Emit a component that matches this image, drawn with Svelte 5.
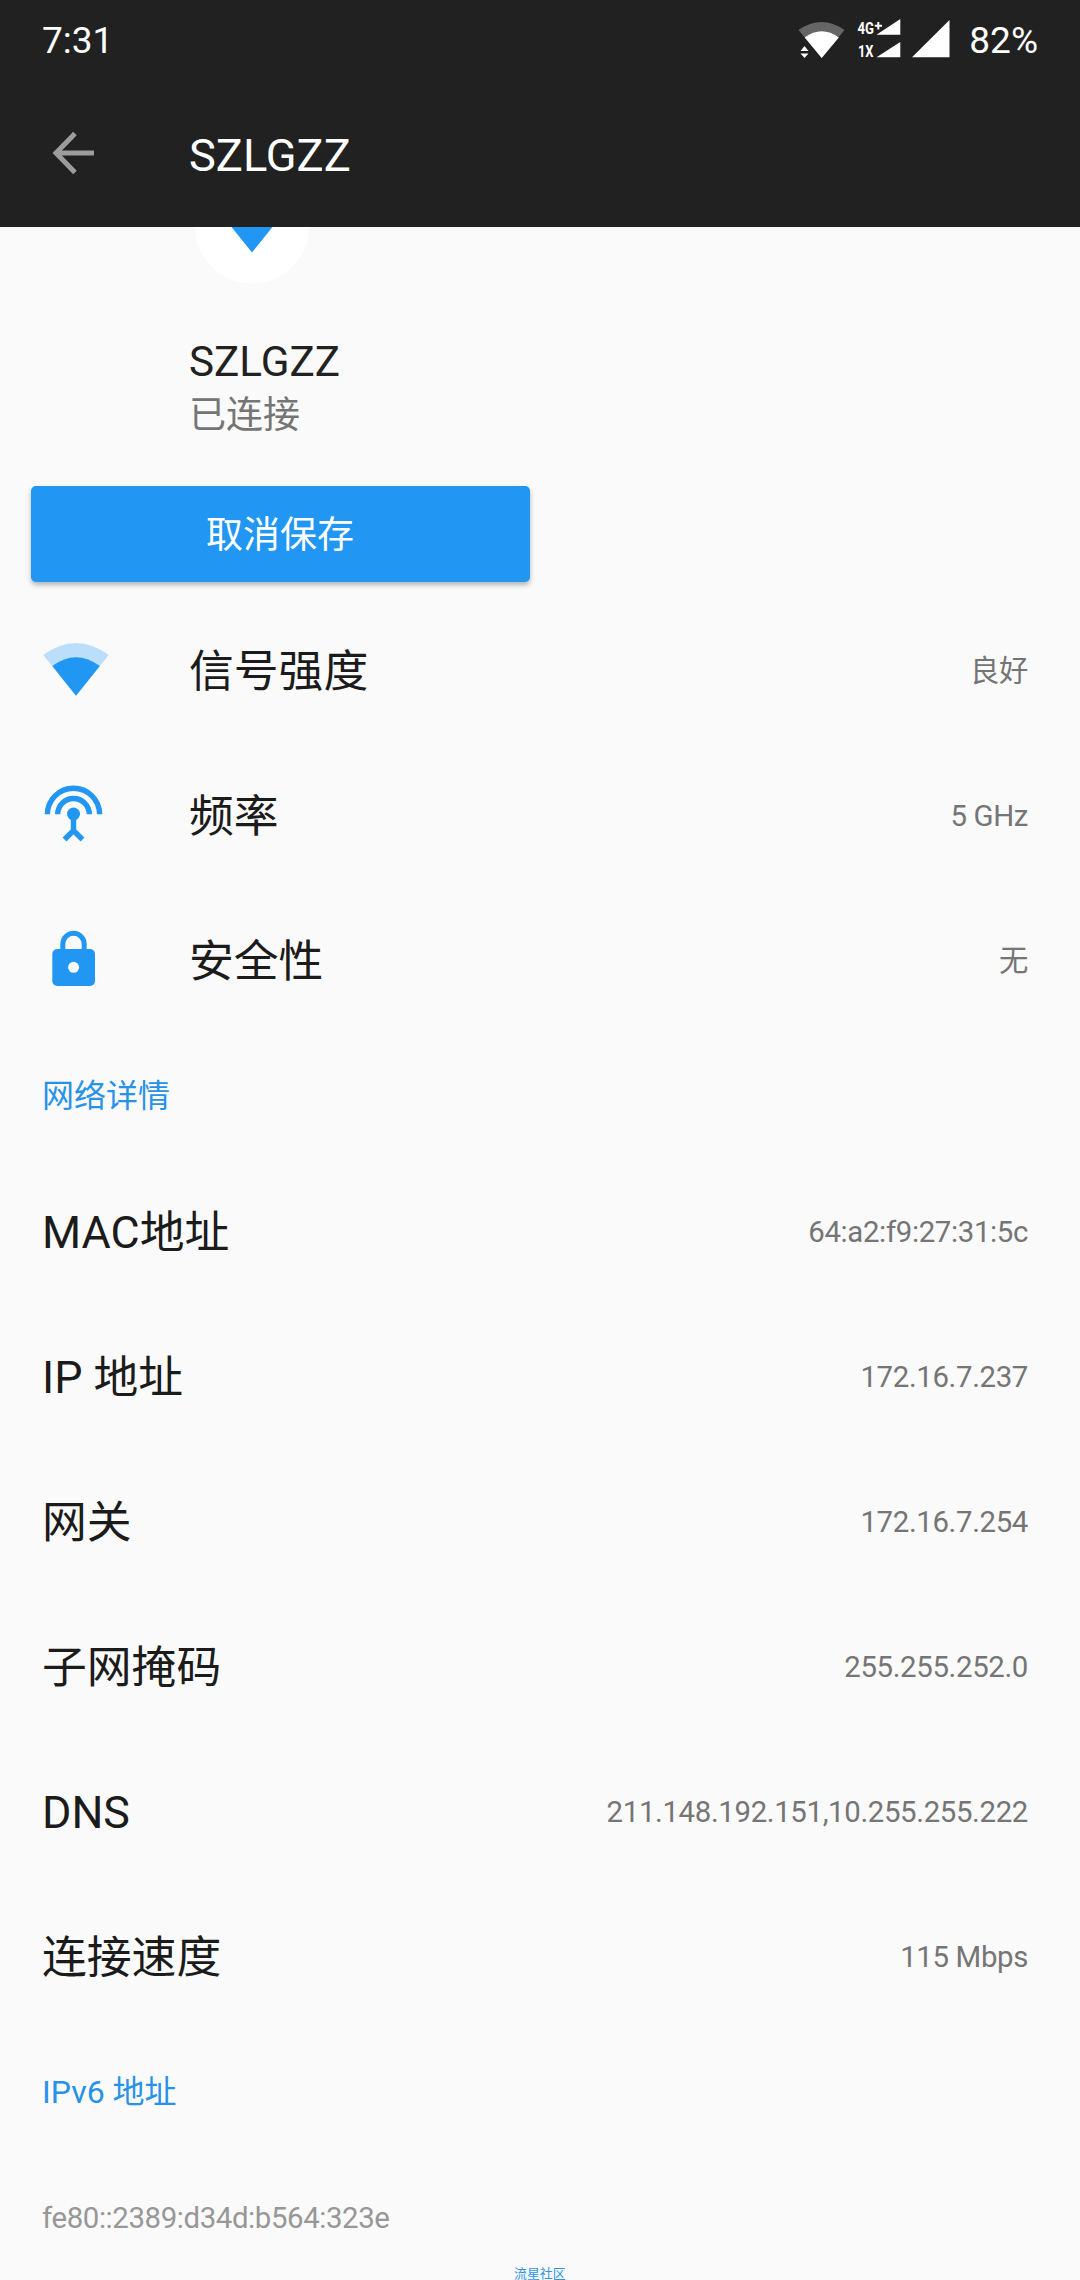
<script>
    let ssid = 'SZLGZZ';

    let summary = [
        { icon: 'wifi', title: '信号强度', value: '良好' },
        { icon: 'antenna', title: '频率', value: '5 GHz' },
        { icon: 'lock', title: '安全性', value: '无' }
    ];

    let details = [
        { title: 'MAC地址', value: '64:a2:f9:27:31:5c' },
        { title: 'IP 地址', value: '172.16.7.237' },
        { title: '网关', value: '172.16.7.254' },
        { title: '子网掩码', value: '255.255.252.0' },
        { title: 'DNS', value: '211.148.192.151,10.255.255.222' },
        { title: '连接速度', value: '115 Mbps' }
    ];
</script>

<div class="screen">
    <header>
        <div class="status-bar">
            <span class="clock">7:31</span>
            <svg class="status-icons" width="156" height="46" viewBox="796 17 156 46">
                <path d="M798.5 30Q821.5 14 844.5 30L821.7 58Z" fill="#666666"/>
                <path d="M804.7 37.5Q821.7 25 838.8 37.5L821.7 58Z" fill="#ffffff"/>
                <path d="M804.5 46L808.5 51H800.5ZM804.5 58L808.5 53.5H800.5Z" fill="#ffffff"/>
                <text x="857.5" y="34.3" font-size="16" textLength="16.5" lengthAdjust="spacingAndGlyphs">4G</text>
                <path d="M878.3 22V29.4M874.8 25.7H882" stroke="#ffffff" stroke-width="2"/>
                <text x="858" y="57.3" font-size="16" textLength="15.5" lengthAdjust="spacingAndGlyphs">1X</text>
                <path d="M876.5 34.7H900.3V19ZM876.5 57.2H900.3V42ZM912 57.3H949.5V20Z" fill="#ffffff"/>
            </svg>
            <span class="battery">82%</span>
        </div>
        <div class="toolbar">
            <svg class="back" width="44" height="44" viewBox="0 0 44 44">
                <path d="M24 2.5L5 22L24 41.5M5 22H43" fill="none" stroke="#9c9c9c" stroke-width="5"/>
            </svg>
            <h1>{ssid}</h1>
        </div>
    </header>

    <main>
        <section class="network">
            <svg class="avatar" width="118" height="57" viewBox="0 0 118 57">
                <circle cx="59" cy="-0.5" r="57" fill="#ffffff"/>
                <path d="M38.5 0H79.5L59 25.5Z" fill="#2196f3"/>
            </svg>
            <h2>{ssid}</h2>
            <p>已连接</p>
        </section>

        <button class="forget">取消保存</button>

        {#each summary as item}
            <div class="row">
                <div class="icon">
                    {#if item.icon === 'wifi'}
                        <svg width="68" height="69" viewBox="42 636 68 69">
                            <path d="M43.3 655Q76 631 108.7 655L76 695.7Z" fill="#bbdefb"/>
                            <path d="M52.3 666Q76 648.5 99.8 666L76 695.7Z" fill="#2196f3"/>
                        </svg>
                    {:else if item.icon === 'antenna'}
                        <svg width="68" height="69" viewBox="42 781 68 69">
                            <path d="M47.4 814.3A26.1 26.1 0 0 1 99.6 814.3M57.7 814.3A15.8 15.8 0 0 1 89.3 814.3M73.5 814V830M64.5 839.5L73.5 830.5L82.5 839.5" fill="none" stroke="#2196f3" stroke-width="5.4"/>
                            <circle cx="73.5" cy="814" r="6.5" fill="#2196f3"/>
                        </svg>
                    {:else}
                        <svg width="68" height="69" viewBox="42 926 68 69">
                            <path d="M62.8 950V944A10.7 10.7 0 0 1 84.2 944V950" fill="none" stroke="#2196f3" stroke-width="5"/>
                            <rect x="52.3" y="949" width="42.7" height="37" rx="5" fill="#2196f3"/>
                            <circle cx="73.6" cy="967.3" r="5.5" fill="#fafafa"/>
                        </svg>
                    {/if}
                </div>
                <span class="title">{item.title}</span>
                <span class="value">{item.value}</span>
            </div>
        {/each}

        <h3>网络详情</h3>

        {#each details as item}
            <div class="row">
                <span class="title">{item.title}</span>
                <span class="value">{item.value}</span>
            </div>
        {/each}

        <h3>IPv6 地址</h3>
        <div class="ipv6">fe80::2389:d34d:b564:323e</div>
    </main>

    <div class="watermark">流星社区</div>
</div>

<style>
    :global(body) {
        margin: 0;
        background: #fafafa;
    }

    .screen {
        position: relative;
        width: 1080px;
        height: 2280px;
        overflow: hidden;
        background: #fafafa;
        color: #1b1b1b;
        font-family: Roboto, "Noto Sans CJK SC", sans-serif;
    }

    h1, h2, h3, p {
        margin: 0;
        font-weight: 400;
    }

    header {
        height: 227px;
        background: #212121;
        color: #ffffff;
    }

    .status-bar {
        display: flex;
        align-items: center;
        height: 80px;
        padding: 0 42px;
        font-size: 37px;
        line-height: 80px;
    }

    .clock, .battery {
        padding-top: 2px;
    }

    .status-icons {
        margin-left: auto;
        margin-right: 17px;
        fill: #ffffff;
        font-weight: 700;
    }

    .toolbar {
        display: flex;
        align-items: center;
        height: 146px;
        padding-left: 51px;
    }

    .back {
        margin-right: 94px;
    }

    h1 {
        font-size: 45.2px;
        line-height: 60px;
        padding-top: 6px;
    }

    .network {
        padding-left: 189px;
        height: 259px;
    }

    .avatar {
        display: block;
        margin-left: 4px;
    }

    h2 {
        margin-top: 53px;
        font-size: 42.2px;
        line-height: 50px;
        color: #212121;
    }

    p {
        font-size: 37px;
        line-height: 58px;
        color: #757575;
    }

    .forget {
        display: block;
        width: 499px;
        height: 96px;
        margin: 0 0 16px 31px;
        padding: 0 1px 5px 0;
        border: none;
        border-radius: 5px;
        background: #2196f3;
        box-shadow: 0 3px 5px rgba(0, 0, 0, 0.28);
        color: #ffffff;
        font-family: inherit;
        font-size: 37px;
    }

    .row {
        display: flex;
        align-items: center;
        height: 145px;
        padding: 0 52px 0 42px;
    }

    .icon {
        width: 147px;
        height: 69px;
    }

    .title {
        padding-top: 2px;
        font-size: 44.8px;
        line-height: 60px;
    }

    .value {
        margin-left: auto;
        font-size: 29.4px;
        line-height: 40px;
        letter-spacing: -0.36px;
        color: #757575;
    }

    h3 {
        height: 126px;
        padding-left: 42px;
        font-size: 32px;
        line-height: 126px;
        color: #2892e8;
    }

    .ipv6 {
        padding-left: 42px;
        font-size: 29.4px;
        line-height: 127px;
        letter-spacing: -0.4px;
        color: #979797;
    }

    .watermark {
        position: absolute;
        left: 514px;
        bottom: 0;
        font-size: 12.9px;
        line-height: 13px;
        color: #2f93e6;
    }
</style>
